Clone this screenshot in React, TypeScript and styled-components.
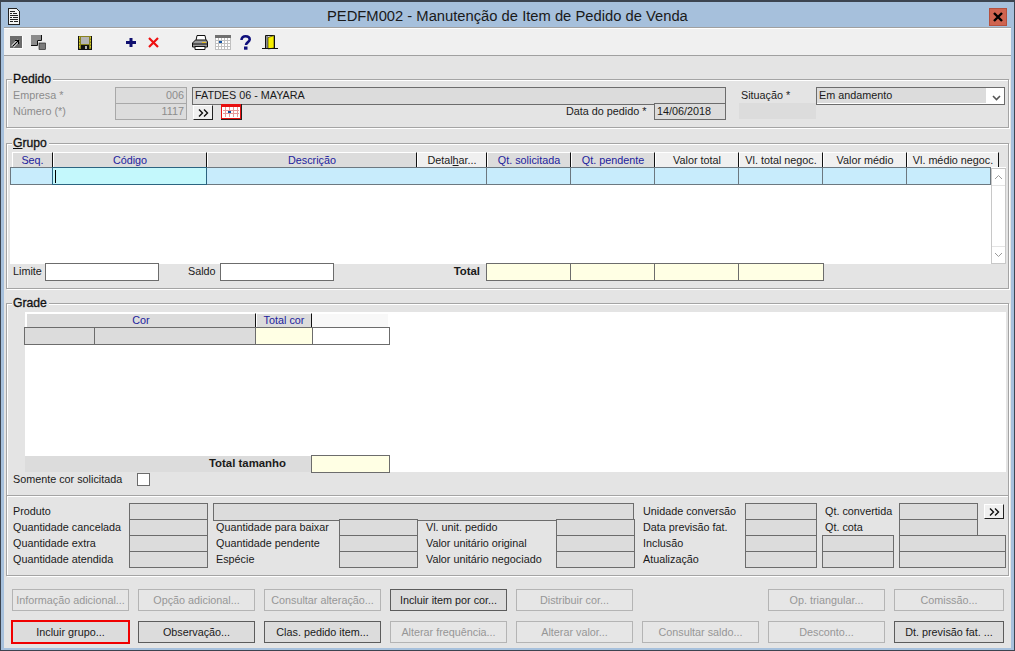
import React from "react";
import styled, { createGlobalStyle } from "styled-components";

const Global = createGlobalStyle`
  html, body { margin: 0; padding: 0; background: #a6c0dc; }
  body { font-family: "Liberation Sans", Arial, sans-serif; font-size: 10.8px; color: #111; overflow: hidden; }
  * { box-sizing: border-box; }
`;

const Frame = styled.div`
  width: 1015px; height: 651px; display: flex; flex-direction: column;
  border: 1px solid #3c4450; border-top-width: 2px; background: #a6c0dc; padding: 0 3px 2px;
`;
const TitleBar = styled.div`
  height: 25px; flex: none; display: flex; align-items: center; margin: 0 -3px; padding: 0 4px 0 7px;
`;
const TitleIcon = styled.svg`
  margin-top: 3px; flex: none;
`;
const TitleText = styled.div`
  margin-left: 307px; margin-top: 3px; font-size: 14.76px; line-height: 18px; color: #1a1a1a; white-space: nowrap;
`;
const CloseBtn = styled.div`
  margin-left: auto; margin-right: 3px; width: 18px; height: 18px; margin-top: 4px; background: #cf6450; border: 1px solid #b5503e;
  display: flex; align-items: center; justify-content: center;
`;
const Toolbar = styled.div`
  height: 29px; flex: none; background: #f0f0f0; border-top: 1px solid #a0a0a0; border-bottom: 1px solid #a0a0a0;
  box-shadow: inset 0 1px 0 #fff; display: flex; align-items: center; padding: 2px 0 0 6px;
`;
const Tool = styled.svg<{ $ml: number }>`
  margin-left: ${p => p.$ml}px; flex: none; display: block;
`;
const Body = styled.div`
  flex: 1; background: #e4e4e4; padding: 23px 2px 0; display: flex; flex-direction: column; min-height: 0;
`;
const GroupBox = styled.div<{ $h: number; $mt?: number }>`
  position: relative; height: ${p => p.$h}px; margin-top: ${p => p.$mt ?? 0}px; flex: none;
  border: 1px solid #a4a4a4; box-shadow: inset 1px 1px 0 #fff, 1px 1px 0 #fff; padding-top: 7px;
`;
const Legend = styled.div`
  position: absolute; left: 5px; top: -8px; background: #e4e4e4; padding: 0 2px 0 1px; font-weight: 500;
  font-size: 12.2px; line-height: 14px; color: #111; -webkit-text-stroke: 0.3px #111;
`;
const U = styled.span`text-decoration: underline;`;
const Row = styled.div<{ $pl?: number }>`
  display: flex; height: 16px; align-items: flex-start; padding-left: ${p => p.$pl ?? 0}px;
`;
const Label = styled.div<{ $w: number; $ml?: number; $off?: boolean }>`
  width: ${p => p.$w}px; margin-left: ${p => p.$ml ?? 0}px; flex: none; line-height: 16px; white-space: nowrap;
  color: ${p => (p.$off ? "#8c8c8c" : "#1a1a1a")};
`;
const Value = styled.div<{ $w: number; $ml?: number; $h?: number; $off?: boolean; $right?: boolean }>`
  width: ${p => p.$w}px; margin-left: ${p => p.$ml ?? 0}px; height: ${p => p.$h ?? 17}px; flex: none;
  background: #dcdcdc; border: 1px solid ${p => (p.$off ? "#a8a8a8" : "#6c6c6c")};
  line-height: 15px; padding: 0 2px; white-space: nowrap; text-align: ${p => (p.$right ? "right" : "left")};
  color: ${p => (p.$off ? "#8c8c8c" : "#1a1a1a")};
`;
const Blank = styled.div<{ $w: number; $ml: number }>`
  width: ${p => p.$w}px; height: 16px; margin-left: ${p => p.$ml}px; background: #dcdcdc; flex: none;
`;
const Combo = styled.div`
  width: 189px; height: 18px; flex: none; background: #fff; border: 1px solid #6c6c6c; display: flex; padding-bottom: 1px;
`;
const ComboText = styled.div`
  width: 169px; background: #dcdcdc; line-height: 14px; padding-left: 2px; color: #1a1a1a; height: 15px;
`;
const ComboArrow = styled.div`
  flex: 1; display: flex; align-items: center; justify-content: center; padding: 5px 0 0 2px;
`;
const SmallBtn = styled.div<{ $ml: number; $w: number; $bd?: boolean }>`
  margin-left: ${p => p.$ml}px; margin-top: ${p => (p.$bd ? 1 : 2)}px; width: ${p => p.$w}px; height: 15px; flex: none; background: #f0f0f0;
  border-right: 1px solid #222; border-bottom: 1px solid #222; border-top: 1px solid #fff; border-left: 1px solid #fff;
  display: flex; align-items: center; justify-content: center;
`;
const CalBtn = styled.div<{ $ml: number }>`
  margin-left: ${p => p.$ml}px; margin-top: 1px; width: 21px; height: 16px; flex: none; background: #f0f0f0;
  border-right: 1px solid #222; border-bottom: 1px solid #222; display: flex; align-items: flex-end; justify-content: flex-end;
`;

const HeadRow = styled.div`
  display: flex; height: 15px; margin: 1px 0 0 5px;
`;
const Head = styled.div<{ $w: number; $alt?: boolean }>`
  width: ${p => p.$w}px; flex: none; height: 15px; text-align: center; line-height: 15px; white-space: nowrap;
  background: ${p => (p.$alt ? "#f0f0f0" : "#dcdcdc")}; color: ${p => (p.$alt ? "#1a1a1a" : "#22229c")};
  border-top: 1px solid #fff; border-left: 1px solid #fff; border-right: 1px solid #111; overflow: hidden;
`;
const GradeHeadCell = styled(Head)`
  line-height: 13px;
`;
const GridBody = styled.div`
  width: 996px; height: 97px; margin-left: 3px; background: #fff; display: flex; align-items: flex-start;
`;
const DataArea = styled.div`flex: 1; display: flex; height: 18px;`;
const DataCell = styled.div<{ $w: number; $active?: boolean }>`
  width: ${p => p.$w}px; flex: none; height: 18px; margin-right: -1px; background: ${p => (p.$active ? "#c4f8fc" : "#c8ecfc")};
  border: 1px solid ${p => (p.$active ? "#2c6480" : "#6c7880")}; position: relative; z-index: ${p => (p.$active ? 1 : 0)};
`;
const Caret = styled.div`
  position: absolute; left: 2px; top: 2px; width: 1px; height: 13px; background: #000;
`;
const Scroll = styled.div`
  width: 15px; height: 96px; flex: none; border: 1px solid #c8c8c8; background: #fff;
  display: flex; flex-direction: column; justify-content: space-between; margin-top: 1px;
`;
const ScrollBtn = styled.div<{ $top?: boolean }>`
  height: 17px; display: flex; align-items: center; justify-content: center; background: #fff;
  ${p => (p.$top ? "border-bottom" : "border-top")}: 1px solid #e4e4e4;
`;
const GrupoFoot = styled.div`
  display: flex; align-items: flex-start; height: 18px; margin-top: -1px; padding-left: 6px; position: relative;
`;
const WhiteInput = styled.div<{ $w: number }>`
  width: ${p => p.$w}px; height: 18px; flex: none; background: #fff; border: 1px solid #6c6c6c;
`;
const FootLabel = styled.div<{ $w: number; $ml?: number; $bold?: boolean; $right?: boolean }>`
  width: ${p => p.$w}px; margin-left: ${p => p.$ml ?? 0}px; flex: none; line-height: 16px;
  font-weight: ${p => (p.$bold ? 700 : 400)}; font-size: ${p => (p.$bold ? 11.4 : 10.8)}px;
  text-align: ${p => (p.$right ? "right" : "left")}; white-space: nowrap; color: #1a1a1a;
`;
const Yellow = styled.div<{ $w: number; $ml?: number; $h?: number; $mt?: number }>`
  width: ${p => p.$w}px; height: ${p => p.$h ?? 18}px; margin-left: ${p => p.$ml ?? 0}px; margin-top: ${p => p.$mt ?? 0}px;
  margin-right: -1px; flex: none; background: #ffffe4; border: 1px solid #6c6c6c;
`;
const GradeArea = styled.div`
  width: 981px; height: 160px; margin: 1px 0 0 18px; background: #fff; display: flex; flex-direction: column;
`;
const GradeHead = styled.div`
  display: flex; height: 15px; padding-left: 1px; margin-top: 1px; flex: none;
`;
const GradeHeadEnd = styled.div`
  width: 76px; height: 15px; background: #f8f8f8; flex: none; border-top: 1px solid #fff;
`;
const GradeRow = styled.div`
  display: flex; height: 18px; margin-left: -1px; flex: none; margin-top: -1px;
`;
const GradeCell = styled.div<{ $w: number; $bg: string }>`
  width: ${p => p.$w}px; height: 18px; flex: none; margin-right: -1px; background: ${p => p.$bg}; border: 1px solid #6c6c6c;
`;
const GradeFoot = styled.div`
  margin-top: auto; display: flex; height: 16px; flex: none; align-items: flex-start;
`;
const TotalStrip = styled.div`
  width: 286px; height: 16px; background: #dcdcdc; font-weight: 700; font-size: 11.4px; text-align: right; padding-right: 25px; line-height: 15px; color: #1a1a1a; flex: none;
`;
const CheckRow = styled.div`
  display: flex; align-items: center; height: 16px; padding-left: 6px; margin-top: -1px;
`;
const Check = styled.div`
  width: 13px; height: 13px; margin-left: 124px; background: #fff; border: 1px solid #6c6c6c; margin-top: 1px; flex: none;
`;
const ActionRow = styled.div<{ $mt: number }>`
  display: flex; gap: 9px; padding-left: 6px; margin-top: ${p => p.$mt}px; flex: none;
`;
const Action = styled.div<{ $w?: number; $on?: boolean; $red?: boolean; $ml?: number }>`
  width: ${p => p.$w ?? 117}px; height: 22px; flex: none; margin-left: ${p => p.$ml ?? 0}px;
  display: flex; align-items: center; justify-content: center; white-space: nowrap; line-height: 20px;
  background: ${p => (p.$on ? "#dcdcdc" : "#e6e6e6")};
  border: 1px solid ${p => (p.$red ? "#f00000" : p.$on ? "#5c5c5c" : "#b4b4b4")};
  color: ${p => (p.$on ? "#1a1a1a" : "#969696")};
  box-shadow: ${p => (p.$red ? "0 0 0 1px #f00000" : "none")};
`;

const Chevron = () => (
  <svg width="9" height="6" viewBox="0 0 9 6"><path d="M1 1l3.5 3.5L8 1" fill="none" stroke="#555" strokeWidth="1.6" /></svg>
);
const ScrollArrow = ({ up }: { up?: boolean }) => (
  <svg width="9" height="6" viewBox="0 0 9 6"><path d={up ? "M1 5l3.5-3.5L8 5" : "M1 1l3.5 3.5L8 1"} fill="none" stroke="#9a9a9a" strokeWidth="1" /></svg>
);
const DoubleChevron = () => (
  <svg width="11" height="8" viewBox="0 0 11 8"><path d="M1 .5L4.500 4 1 7.500M6 .5L9.500 4 6 7.500" fill="none" stroke="#111" strokeWidth="1.4" /></svg>
);
const RedCalendar = () => (
  <svg width="20" height="15" viewBox="0 0 20 15">
    <rect width="20" height="15" fill="#fff" />
    <path d="M4.500 3v10M8.500 3v10M12.500 3v10M16.500 3v10M2 6.500h16M2 9.500h16" stroke="#e89a9a" shapeRendering="crispEdges" />
    <rect x="0.500" y="0.500" width="19" height="14" fill="none" stroke="#e81010" shapeRendering="crispEdges" />
    <rect x="1" y="1" width="18" height="2" fill="#e81010" />
    <rect x="7" y="7" width="3" height="2" fill="#1050a0" />
  </svg>
);

const heads: [React.ReactNode, number, boolean][] = [
  ["Seq.", 41, false], ["Código", 154, false], ["Descrição", 210, false],
  [<>Detal<U>h</U>ar...</>, 70, true], ["Qt. solicitada", 84, false], ["Qt. pendente", 84, false],
  ["Valor total", 84, true], ["Vl. total negoc.", 84, true], ["Valor médio", 84, true], ["Vl. médio negoc.", 92, true],
];

export default function App() {
  return (
    <>
      <Global />
      <Frame>
        <TitleBar>
          <TitleIcon width="12" height="17" viewBox="0 0 12 17">
            <path d="M.5.5h8l3 3v13H.5z" fill="#f4f4f4" stroke="#222" shapeRendering="crispEdges" />
            <path d="M2 3h5M2 5h2M5 5h4M2 7h8M2 9h2M5 9h5M2 11h8M2 13h3M6 13h4" stroke="#222" strokeWidth="1" shapeRendering="crispEdges" />
          </TitleIcon>
          <TitleText>PEDFM002 - Manutenção de Item de Pedido de Venda</TitleText>
          <CloseBtn>
            <svg width="12" height="10" viewBox="0 0 12 10"><path d="M2 1l8 8M10 1l-8 8" stroke="#000" strokeWidth="2.4" /></svg>
          </CloseBtn>
        </TitleBar>
        <Toolbar>
          <Tool $ml={0} width="13" height="13" viewBox="0 0 13 13">
            <rect x="0" y="0" width="12" height="12" fill="#6c6c6c" />
            <path d="M12.500 0v12.500H0" fill="none" stroke="#fff" />
            <path d="M2.500 10.500l6-6" stroke="#fff" strokeWidth="3" />
            <path d="M2.500 10.500l6-6M5 4.500h3.500V8" fill="none" stroke="#000" strokeWidth="1.100" />
          </Tool>
          <Tool $ml={8} width="15" height="15" viewBox="0 0 15 15">
            <path d="M0 0h10v5H6v5H0z" fill="#8c8c8c" />
            <path d="M10.500 0v5.500h-4v5H0" fill="none" stroke="#111" />
            <rect x="8" y="8" width="6.500" height="6.500" fill="#7c7c7c" stroke="#111" strokeWidth="0.600" />
          </Tool>
          <Tool $ml={32} width="14" height="14" viewBox="0 0 14 14">
            <rect width="14" height="14" fill="#111" />
            <rect x="1" y="0" width="12" height="13" fill="#8a8420" />
            <path d="M1.500 1v11M12.500 1v11" stroke="#d8d020" strokeDasharray="1.500 1.500" />
            <rect x="3" y="1" width="8" height="7" fill="#b4b4b4" />
            <rect x="3" y="9" width="8" height="5" fill="#111" />
            <rect x="7" y="10" width="2" height="3" fill="#b4b4b4" />
          </Tool>
          <Tool $ml={34} width="10" height="9" viewBox="0 0 10 9">
            <path d="M3.500 0h3v3H10v3H6.500v3h-3V6H0V3h3.500z" fill="#101070" />
          </Tool>
          <Tool $ml={12} width="11" height="11" viewBox="0 0 11 11">
            <path d="M1 1l9 9M10 1l-9 9" stroke="#ee1010" strokeWidth="2.2" />
          </Tool>
          <Tool $ml={33} width="16" height="15" viewBox="0 0 16 15">
            <path d="M5 .5h8l1 5H4z" fill="#fff" stroke="#111" />
            <path d="M.5 8l3-3h11l1 2v5H.5z" fill="#9c9c9c" stroke="#111" />
            <path d="M1 9h14" stroke="#111" />
            <path d="M3 11.500h10v3H3z" fill="#fff" stroke="#111" />
            <rect x="10" y="7" width="4" height="1" fill="#e8c020" />
          </Tool>
          <Tool $ml={7} width="16" height="15" viewBox="0 0 16 15">
            <rect width="16" height="3" fill="#707070" />
            <rect y="3" width="16" height="12" fill="#fff" />
            <path d="M.5 3v12M3.500 3v12M6.500 3v12M9.500 3v12M12.500 3v12M15.500 3v12M0 5.500h16M0 8.500h16M0 11.500h16M0 14.500h16" stroke="#c0c0c0" shapeRendering="crispEdges" />
            <rect x="4" y="6" width="3" height="2" fill="#1050a0" />
          </Tool>
          <Tool $ml={9} width="11" height="15" viewBox="0 0 11 15">
            <path d="M1.500 5C1.500 2.500 3.200 1.300 5.500 1.300S9.700 2.500 9.700 4.600C9.700 7 6 7.300 6 10" fill="none" stroke="#10107c" strokeWidth="2.600" />
            <rect x="4" y="11.500" width="3.500" height="3.200" fill="#10107c" />
          </Tool>
          <Tool $ml={11} width="16" height="15" viewBox="0 0 16 15">
            <path d="M3.500.5h9v13" fill="none" stroke="#111" />
            <path d="M3.500.5V13" stroke="#111" />
            <path d="M4 1h2v12H4z" fill="#8c8c8c" />
            <path d="M6 2.500l6-2V13l-6 1z" fill="#f8f000" stroke="#111" strokeWidth="0.600" />
            <path d="M0 13.500h16" stroke="#111" />
          </Tool>
        </Toolbar>
        <Body>
          <GroupBox $h={49}>
            <Legend>Pedido</Legend>
            <Row $pl={6}>
              <Label $w={102} $off>Empresa *</Label>
              <Value $w={72} $off $right>006</Value>
              <Value $w={534} $ml={5} $h={18}>FATDES 06 - MAYARA</Value>
              <Label $w={75} $ml={15}>Situação *</Label>
              <Combo>
                <ComboText>Em andamento</ComboText>
                <ComboArrow><Chevron /></ComboArrow>
              </Combo>
            </Row>
            <Row $pl={6}>
              <Label $w={102} $off>Número (*)</Label>
              <Value $w={72} $off $right>1117</Value>
              <SmallBtn $ml={6} $w={20}><DoubleChevron /></SmallBtn>
              <CalBtn $ml={8}><RedCalendar /></CalBtn>
              <Label $w={88} $ml={324}>Data do pedido *</Label>
              <Value $w={72}>14/06/2018</Value>
              <Blank $w={77} $ml={13} />
            </Row>
          </GroupBox>

          <GroupBox $h={146} $mt={15}>
            <Legend><U>G</U>rupo</Legend>
            <HeadRow>
              {heads.map(([t, w, alt], i) => <Head key={i} $w={w} $alt={alt}>{t}</Head>)}
            </HeadRow>
            <GridBody>
              <DataArea>
                <DataCell $w={43} />
                <DataCell $w={155} $active><Caret /></DataCell>
                <DataCell $w={281} />
                <DataCell $w={85} />
                <DataCell $w={85} />
                <DataCell $w={85} />
                <DataCell $w={85} />
                <DataCell $w={85} />
                <DataCell $w={85} />
              </DataArea>
              <Scroll>
                <ScrollBtn $top><ScrollArrow up /></ScrollBtn>
                <ScrollBtn><ScrollArrow /></ScrollBtn>
              </Scroll>
            </GridBody>
            <GrupoFoot>
              <FootLabel $w={32}>Limite</FootLabel>
              <WhiteInput $w={114} />
              <FootLabel $w={32} $ml={29}>Saldo</FootLabel>
              <WhiteInput $w={114} />
              <FootLabel $w={146} $bold $right>Total</FootLabel>
              <Yellow $w={85} $ml={6} />
              <Yellow $w={85} />
              <Yellow $w={85} />
              <Yellow $w={86} />
            </GrupoFoot>
          </GroupBox>

          <GroupBox $h={193} $mt={14}>
            <Legend>Grade</Legend>
            <GradeArea>
              <GradeHead>
                <GradeHeadCell $w={230}>Cor</GradeHeadCell>
                <GradeHeadCell $w={56}>Total cor</GradeHeadCell>
                <GradeHeadEnd />
              </GradeHead>
              <GradeRow>
                <GradeCell $w={71} $bg="#dcdcdc" />
                <GradeCell $w={162} $bg="#dcdcdc" />
                <GradeCell $w={58} $bg="#ffffe4" />
                <GradeCell $w={78} $bg="#fff" />
              </GradeRow>
              <GradeFoot>
                <TotalStrip>Total tamanho</TotalStrip>
                <Yellow $w={79} $ml={0} $h={18} $mt={-1} />
              </GradeFoot>
            </GradeArea>
            <CheckRow>
              <Label $w={0}>Somente cor solicitada</Label>
              <Check />
            </CheckRow>
          </GroupBox>

          <GroupBox $h={81} $mt={-1}>
            <Row $pl={6}>
              <Label $w={116}>Produto</Label>
              <Value $w={79} />
              <Value $w={421} $ml={5} $h={18} />
              <Label $w={102} $ml={9}>Unidade conversão</Label>
              <Value $w={72} />
              <Label $w={74} $ml={8}>Qt. convertida</Label>
              <Value $w={79} />
              <SmallBtn $ml={6} $w={20} $bd><DoubleChevron /></SmallBtn>
            </Row>
            <Row $pl={6}>
              <Label $w={116}>Quantidade cancelada</Label>
              <Value $w={79} />
              <Label $w={123} $ml={8}>Quantidade para baixar</Label>
              <Value $w={79} />
              <Label $w={130} $ml={8}>Vl. unit. pedido</Label>
              <Value $w={79} />
              <Label $w={102} $ml={8}>Data previsão fat.</Label>
              <Value $w={72} />
              <Label $w={74} $ml={8}>Qt. cota</Label>
              <Value $w={79} />
            </Row>
            <Row $pl={6}>
              <Label $w={116}>Quantidade extra</Label>
              <Value $w={79} />
              <Label $w={123} $ml={8}>Quantidade pendente</Label>
              <Value $w={79} />
              <Label $w={130} $ml={8}>Valor unitário original</Label>
              <Value $w={79} />
              <Label $w={102} $ml={8}>Inclusão</Label>
              <Value $w={72} />
              <Value $w={72} $ml={5} />
              <Value $w={107} $ml={5} />
            </Row>
            <Row $pl={6}>
              <Label $w={116}>Quantidade atendida</Label>
              <Value $w={79} />
              <Label $w={123} $ml={8}>Espécie</Label>
              <Value $w={79} />
              <Label $w={130} $ml={8}>Valor unitário negociado</Label>
              <Value $w={79} />
              <Label $w={102} $ml={8}>Atualização</Label>
              <Value $w={72} />
              <Value $w={72} $ml={5} />
              <Value $w={107} $ml={5} />
            </Row>
          </GroupBox>

          <ActionRow $mt={13}>
            <Action>Informação adicional...</Action>
            <Action>Opção adicional...</Action>
            <Action>Consultar alteração...</Action>
            <Action $on>Incluir item por cor...</Action>
            <Action>Distribuir cor...</Action>
            <Action $ml={126}>Op. triangular...</Action>
            <Action $w={110}>Comissão...</Action>
          </ActionRow>
          <ActionRow $mt={10}>
            <Action $on $red>Incluir grupo...</Action>
            <Action $on>Observação...</Action>
            <Action $on>Clas. pedido item...</Action>
            <Action>Alterar frequência...</Action>
            <Action>Alterar valor...</Action>
            <Action>Consultar saldo...</Action>
            <Action>Desconto...</Action>
            <Action $w={110} $on>Dt. previsão fat. ...</Action>
          </ActionRow>
        </Body>
      </Frame>
    </>
  );
}
